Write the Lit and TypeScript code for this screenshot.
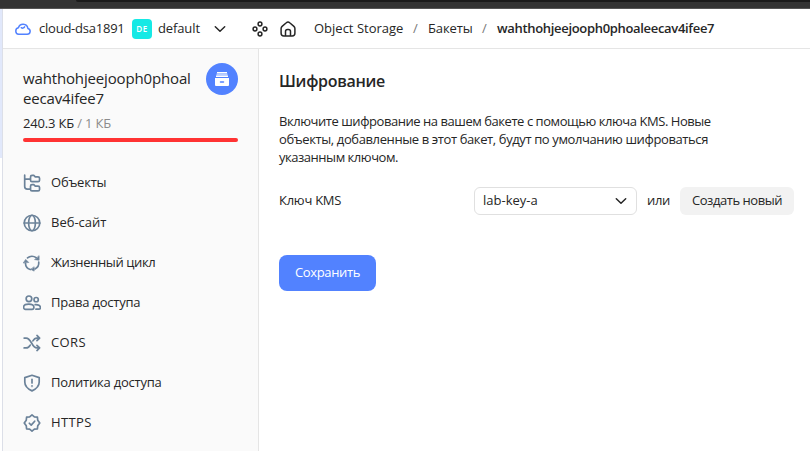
import { LitElement, html, css, svg } from "lit";
import { customElement } from "lit/decorators.js";

const chevron = svg`<path d="M3.3 5.800 8 10.300l4.700-4.500" />`;

const icons = {
  objects: svg`<path d="M1.500 1v10.200c0 1.400.9 2.300 2.300 2.300h2.400M1.500 4.500h4.700M6.700 2.600c0-.8.5-1.300 1.300-1.300h1.600l1.300 1.200h2.500c.8 0 1.300.5 1.300 1.300v1.700c0 .8-.5 1.300-1.300 1.300H8c-.8 0-1.300-.5-1.300-1.300zM6.700 10.800c0-.8.5-1.300 1.300-1.300h1.600l1.300 1.200h2.500c.8 0 1.300.5 1.300 1.300v1.700c0 .8-.5 1.300-1.300 1.300H8c-.8 0-1.300-.5-1.300-1.300z" />`,
  website: svg`<circle cx="8" cy="8" r="6.900" /><ellipse cx="8" cy="8" rx="3" ry="6.900" /><path d="M1 8h14" />`,
  lifecycle: svg`<path d="M4 3.500a6 6 0 0 1 7.700-.2M14 7.300a6 6 0 0 1-3.300 6M6.400 13.800a6 6 0 0 1-4.200-5.600" /><path class="solid" d="M14.300 1.800v3.700l-3.700-.5zM.4 7.700l2-2.900 2.500 2.500zM9.900 11.700v3.500L7 13.700z" />`,
  access: svg`<circle cx="5.300" cy="4.300" r="2.500" /><circle cx="11.700" cy="5" r="1.900" /><path d="M.5 11.800c0-1.700 2-2.800 4.600-2.800s4.600 1.100 4.600 2.800c0 1-.7 1.800-1.700 1.800H2.200c-1 0-1.700-.8-1.700-1.800zM10.800 9.500c2.700-.2 4.700.9 4.700 2.500 0 .9-.6 1.500-1.500 1.500h-2.500" />`,
  cors: svg`<path d="M1 3.600h1.800c4.800 0 4.800 8.800 9.600 8.800h2.200M1 12.400h1.800c1.700 0 2.800-1.100 3.600-2.600M8.800 6.200c.8-1.500 1.900-2.600 3.600-2.600h2.200M12.400 1.300l2.400 2.300-2.400 2.300M12.400 10.100l2.400 2.300-2.400 2.300" />`,
  policy: svg`<path d="M8 1.100 14.400 3.200v4c0 3.200-2.300 6-6.400 7.800C3.900 13.200 1.600 10.400 1.600 7.200v-4z" /><path d="M8 4.800V8" /><circle cx="8" cy="10.800" r=".25" />`,
  https: svg`<path d="m8 .8 2.100 1.700 2.700.3.300 2.700L14.900 8l-1.800 2.500-.3 2.700-2.700.3L8 15.200l-2.100-1.700-2.700-.3-.3-2.700L1.100 8l1.800-2.500.3-2.700 2.700-.3z" /><path d="m5.600 8.200 1.700 1.700 3.100-3.500" />`,
};

const menu = [
  { icon: icons.objects, label: "Объекты", cls: "tight" },
  { icon: icons.website, label: "Веб-сайт", cls: "" },
  { icon: icons.lifecycle, label: "Жизненный цикл", cls: "tighter" },
  { icon: icons.access, label: "Права доступа", cls: "tight" },
  { icon: icons.cors, label: "CORS", cls: "loose" },
  { icon: icons.policy, label: "Политика доступа", cls: "tight" },
  { icon: icons.https, label: "HTTPS", cls: "loose" },
];

@customElement("app-root")
export class AppRoot extends LitElement {
  static styles = css`
    :host {
      display: block;
      height: 451px;
      overflow: hidden;
      background: #fff;
      color: #262626;
      font: 13px/18px "Open Sans", "Noto Sans", sans-serif;
    }
    * { box-sizing: border-box; }
    svg { display: block; fill: none; stroke: currentColor; stroke-width: 1.5; stroke-linecap: round; stroke-linejoin: round; flex: none; }
    .solid { fill: currentColor; stroke-width: .6; }
    button { font: inherit; color: inherit; border: 0; padding: 0 0 2px; margin: 0; }
    .window { height: 9px; background: #333; border-bottom: 1px solid #555; padding-left: 76px; }
    .address { height: 2px; background: #1a1a1a; border-bottom-left-radius: 4px; }
    .frame { display: flex; height: 442px; }
    .strip { width: 3px; flex: none; border-right: 1px solid #dcdfe8; }
    .strip i { display: block; height: 149px; background: #e1e8fb; }
    .page { flex: 1; min-width: 0; display: flex; flex-direction: column; }
    header { height: 40px; flex: none; display: flex; align-items: center; border-bottom: 1px solid #e5e5e5; white-space: nowrap; }
    header span { padding-bottom: 2px; }
    .cloud { color: #5282ff; margin-left: 12px; }
    .name { width: 85px; margin-left: 8px; letter-spacing: -.23px; }
    header .badge { width: 20px; height: 20px; margin-left: 8px; padding: 0; border-radius: 4px; background: #16e9e5; color: #fff; font-size: 8px; line-height: 20px; text-align: center; letter-spacing: .5px; font-weight: 600; }
    .folder { width: 42px; margin-left: 6px; letter-spacing: -.12px; }
    .down { margin-left: 12px; }
    .dots { margin-left: 24px; }
    .home { margin-left: 12px; }
    .c1 { margin-left: 18px; width: 89px; }
    .slash { width: 25px; text-align: center; color: #777; }
    .c2 { width: 44px; letter-spacing: -.1px; }
    .c3 { font-weight: 600; letter-spacing: -.32px; }
    .body { flex: 1; display: flex; min-height: 0; }
    aside { width: 256px; flex: none; background: #fafafa; border-right: 1px solid #e5e5e5; padding: 14px 20px 0; }
    .top { display: flex; justify-content: space-between; }
    .title { font-size: 15px; line-height: 20px; padding-top: 5px; white-space: nowrap; letter-spacing: -.15px; }
    .avatar { width: 32px; height: 32px; border-radius: 50%; background: #5282ff; color: #fff; display: grid; place-items: center; }
    .quota { margin-top: 5px; line-height: 20px; white-space: nowrap; letter-spacing: -.17px; }
    .quota em { color: #8c8c8c; font-style: normal; }
    .bar { height: 4px; border-radius: 2px; background: #ff3333; margin-top: 5px; }
    nav { margin-top: 21px; }
    .item { height: 40px; display: flex; align-items: center; gap: 10px; color: #6b8299; }
    .item span { color: #262626; white-space: nowrap; padding-bottom: 2px; }
    .tight { letter-spacing: -.22px; }
    .tighter { letter-spacing: -.38px; }
    .loose { letter-spacing: .4px; }
    main { flex: 1; padding: 20px 16px 0 20px; }
    h1 { margin: 0; font-size: 16px; line-height: 24px; font-weight: 600; letter-spacing: -.3px; }
    p { margin: 19px 0 0; white-space: nowrap; }
    .p1 { letter-spacing: -.45px; }
    .p2 { letter-spacing: -.39px; }
    .p3 { letter-spacing: -.47px; }
    .field { display: flex; align-items: center; height: 28px; margin-top: 21px; white-space: nowrap; }
    .field span { padding-bottom: 2px; }
    .label { width: 195px; letter-spacing: -.25px; }
    .select { width: 163px; height: 28px; border: 1px solid #e0e0e0; border-radius: 6px; display: flex; align-items: center; justify-content: space-between; padding: 0 7px 0 8px; }
    .or { width: 43px; padding-left: 10px; letter-spacing: -.3px; }
    .create { width: 114px; height: 28px; border-radius: 6px; background: #f2f2f2; letter-spacing: -.46px; }
    .save { width: 97px; height: 36px; border-radius: 8px; background: #5282ff; color: #fff; margin-top: 40px; letter-spacing: -.35px; }
  `;

  render() {
    return html`
      <div class="window"><div class="address"></div></div>
      <div class="frame">
        <div class="strip"><i></i></div>
        <div class="page">
          <header>
            <svg class="cloud" width="16" height="16" viewBox="0 0 16 16"><path d="M3.700 13.300h8.500a3 3 0 0 0 .7-5.900 4.900 4.900 0 0 0-9.500-.6A3.300 3.300 0 0 0 3.700 13.300zM6.300 6.700c.9.700 2.500.6 3.300-.8" /></svg>
            <span class="name">cloud-dsa1891</span>
            <span class="badge">DE</span>
            <span class="folder">default</span>
            <svg class="down" width="16" height="16" viewBox="0 0 16 16">${chevron}</svg>
            <svg class="dots" width="16" height="16" viewBox="0 0 16 16"><circle cx="8" cy="3" r="1.900" /><circle cx="3" cy="8" r="1.900" /><circle cx="13" cy="8" r="1.900" /><circle cx="8" cy="13" r="1.900" /></svg>
            <svg class="home" width="16" height="16" viewBox="0 0 16 16"><path d="M1.100 7.500c0-.9.4-1.600 1-2.100l4.200-3.600c1-.9 2.400-.9 3.400 0l4.200 3.600c.6.5 1 1.200 1 2.100v4.800c0 1.500-1.200 2.700-2.700 2.700H3.800c-1.500 0-2.700-1.200-2.700-2.700zM5.500 14.800V10.500c0-1.200.8-2 2-2h1c1.200 0 2 .8 2 2v4.300" /></svg>
            <span class="c1">Object Storage</span>
            <span class="slash">/</span>
            <span class="c2">Бакеты</span>
            <span class="slash">/</span>
            <span class="c3">wahthohjeejooph0phoaleecav4ifee7</span>
          </header>
          <div class="body">
            <aside>
              <div class="top">
                <div class="title">wahthohjeejooph0phoal<br />eecav4ifee7</div>
                <div class="avatar">
                  <svg width="16" height="16" viewBox="0 0 16 16"><path stroke="none" fill="#fff" d="M3 1h10v1.500H3z" /><path stroke="none" fill="#b9cdff" d="M2.500 2.500h11v2h-11z" /><path stroke="none" fill="#fff" d="M2 4.500h12v1.500H2zM1 7h14v7a1 1 0 0 1-1 1H2a1 1 0 0 1-1-1z" /><path stroke="#5282ff" d="M6.500 11h3" /></svg>
                </div>
              </div>
              <div class="quota"><span>240.3 КБ</span><em> / 1 КБ</em></div>
              <div class="bar"></div>
              <nav>
                ${menu.map((m) => html`<div class="item"><svg width="18" height="18" viewBox="0 0 16 16">${m.icon}</svg><span class=${m.cls}>${m.label}</span></div>`)}
              </nav>
            </aside>
            <main>
              <h1>Шифрование</h1>
              <p>
                <span class="p1">Включите шифрование на вашем бакете с помощью ключа KMS. Новые</span><br />
                <span class="p2">объекты, добавленные в этот бакет, будут по умолчанию шифроваться</span><br />
                <span class="p3">указанным ключом.</span>
              </p>
              <div class="field">
                <span class="label">Ключ KMS</span>
                <div class="select"><span>lab-key-a</span><svg width="16" height="16" viewBox="0 0 16 16">${chevron}</svg></div>
                <span class="or">или</span>
                <button class="create">Создать новый</button>
              </div>
              <button class="save">Сохранить</button>
            </main>
          </div>
        </div>
      </div>
    `;
  }
}
